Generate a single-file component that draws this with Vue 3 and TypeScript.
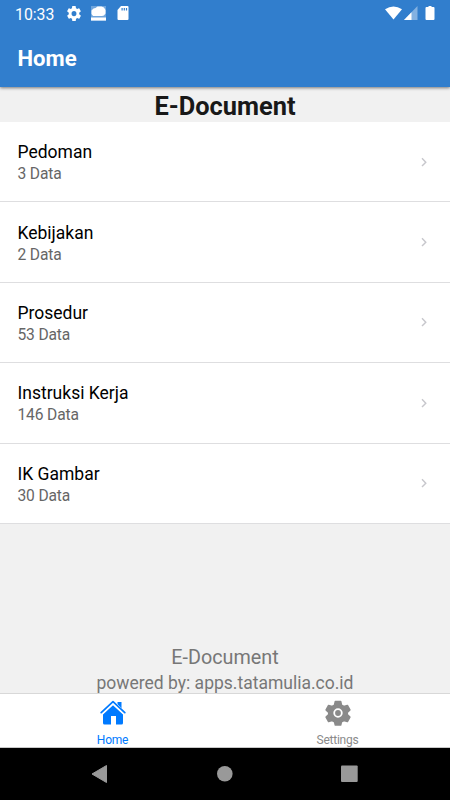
<script setup lang="ts">
interface Category {
  title: string
  count: number
}

const categories: Category[] = [
  { title: 'Pedoman', count: 3 },
  { title: 'Kebijakan', count: 2 },
  { title: 'Prosedur', count: 53 },
  { title: 'Instruksi Kerja', count: 146 },
  { title: 'IK Gambar', count: 30 },
]
</script>

<template>
  <div class="screen">
    <header class="top">
      <div class="status">
        <span class="clock">10:33</span>
        <svg class="s-gear" width="14" height="15" viewBox="2 2 20 20" preserveAspectRatio="none">
          <path fill="#fff" fill-rule="evenodd" d="M19.4 13a7.6 7.6 0 0 0 0-2l2.1-1.6a.5.5 0 0 0 .1-.7l-2-3.4a.5.5 0 0 0-.6-.2l-2.500 1a7.300 7.300 0 0 0-1.700-1l-.4-2.700a.5.5 0 0 0-.5-.4h-4a.5.5 0 0 0-.5.4l-.3 2.700a7.300 7.300 0 0 0-1.700 1l-2.500-1a.5.5 0 0 0-.6.2l-2 3.400a.5.5 0 0 0 .2.700L4.600 11a7.600 7.600 0 0 0 0 2l-2.100 1.600a.5.5 0 0 0-.1.700l2 3.400a.5.5 0 0 0 .6.200l2.500-1a7.300 7.300 0 0 0 1.700 1l.3 2.700a.5.5 0 0 0 .5.400h4a.5.5 0 0 0 .5-.4l.4-2.700a7.300 7.300 0 0 0 1.700-1l2.500 1a.5.5 0 0 0 .6-.2l2-3.400a.5.5 0 0 0-.1-.7zM12 15.500a3.500 3.500 0 1 1 0-7 3.500 3.500 0 0 1 0 7z" />
        </svg>
        <svg class="s-app" width="15" height="15" viewBox="0 0 15 15">
          <path fill="#fff" fill-opacity=".3" d="M0 0h15v15H0z" />
          <path fill="#fff" d="M2 10 .5 8V4.500l2-2 2-.5L6.500.5h4L13 1.500l1.500 2.500v3.500L13 9.500l-2 .5zM0 11.500h15v3H0z" />
        </svg>
        <svg class="s-card" width="12" height="14" viewBox="0 0 12 14">
          <path fill="#fff" fill-rule="evenodd" d="M4 0h6.500Q11.500 0 11.500 1v12q0 1-1 1h-9Q.5 14 .5 13V4zM4.500 2v2.500h1.200V2zM6.700 2v2.500h1.200V2zM8.900 2v2.500h1.200V2z" />
        </svg>
        <svg class="s-right" width="52" height="16" viewBox="0 0 52 16">
          <path fill="#fff" d="M2 3.200Q10.500-2.200 19 3.200L10.500 13.500z" />
          <path fill="#fff" fill-opacity=".4" d="M34.500 0v14H21z" />
          <path fill="#fff" d="M28.500 6.200V14H21z" />
          <path fill="#fff" d="M43.500 1h2V0h3v1h2q1 0 1 1v11q0 1-1 1h-7q-1 0-1-1V2q0-1 1-1z" />
        </svg>
      </div>
      <div class="nav-title">Home</div>
    </header>

    <main class="content">
      <h1 class="heading">E-Document</h1>
      <ul class="list">
        <li v-for="item in categories" :key="item.title" class="row">
          <div class="text">
            <div class="name">{{ item.title }}</div>
            <div class="count">{{ item.count }} Data</div>
          </div>
          <svg class="chevron" width="6" height="10" viewBox="0 0 6 10">
            <path d="M1 1.300l3.800 3.900L1 9.100" fill="none" stroke="#c7c7cc" stroke-width="1.400" />
          </svg>
        </li>
      </ul>
      <footer class="credit">
        <div class="product">E-Document</div>
        <div class="powered">powered by: apps.tatamulia.co.id</div>
      </footer>
    </main>

    <nav class="tabs">
      <div class="tab active">
        <svg width="26" height="25" viewBox="0 0 26 25">
          <path fill="currentColor" d="M17.500 2h4v6.500l-4-4zM13 5.200l10 9.300V23q0 1.500-1.500 1.500H16V16h-5v8.500H4.500Q3 24.500 3 23v-8.500z" />
          <path fill="none" stroke="#fff" stroke-width="3.200" d="M1.200 13.300 13 2.300l11.800 11" />
          <path fill="none" stroke="currentColor" stroke-width="1.700" stroke-linecap="round" stroke-linejoin="round" d="M1.200 12.600 13 1.600l11.800 11" />
        </svg>
        <span class="label">Home</span>
      </div>
      <div class="tab">
        <svg width="26" height="26" viewBox="0 0 26 26">
          <path fill="currentColor" stroke="currentColor" stroke-width="1.500" stroke-linejoin="round" d="M10.300 1.500h5.400l.8 3.600 2.400 1.400 3.500-1.100 2.500 4.500-2.600 2.500v2.200l2.600 2.500-2.500 4.500-3.500-1.100-2.400 1.400-.8 3.100h-5.400l-.8-3.100-2.400-1.400-3.500 1.100-2.500-4.500 2.600-2.500v-2.200l-2.600-2.500 2.500-4.500 3.500 1.100 2.400-1.400z" />
          <circle cx="13" cy="13" r="3.800" fill="none" stroke="#fff" stroke-width="1.800" />
        </svg>
        <span class="label">Settings</span>
      </div>
    </nav>

    <div class="system">
      <svg width="450" height="52" viewBox="0 0 450 52">
        <path fill="#999" stroke="#999" stroke-linejoin="round" d="M106.500 17.500v17L92 26z" />
        <circle cx="224.800" cy="25.700" r="7.800" fill="#999" />
        <rect x="341" y="17.500" width="16.700" height="16.500" rx="1" fill="#999" />
      </svg>
    </div>
  </div>
</template>

<style>
body {
  margin: 0;
}
</style>

<style scoped>
.screen {
  width: 450px;
  height: 800px;
  display: flex;
  flex-direction: column;
  overflow: hidden;
  background: #f1f1f1;
  font-family: Roboto, 'Liberation Sans', sans-serif;
}
.top {
  height: 87px;
  flex: none;
  background: #317ecd;
  color: #fff;
  box-shadow: 0 1px 3px rgba(0, 0, 0, 0.5);
  z-index: 1;
}
.status {
  display: flex;
  align-items: flex-start;
  height: 28px;
  box-sizing: border-box;
  padding: 6px 15px 0;
}
.clock {
  width: 52px;
  font-size: 15.800px;
  line-height: 17px;
}
.s-app {
  margin-left: 10px;
}
.s-card {
  margin-left: 11px;
}
.s-right {
  margin: 0 0 0 auto;
}
.nav-title {
  padding-left: 17.500px;
  line-height: 60px;
  font-size: 22.100px;
  font-weight: 700;
}
.content {
  flex: 1;
  display: flex;
  flex-direction: column;
}
.heading {
  margin: 0;
  height: 35px;
  line-height: 38px;
  font-size: 25.400px;
  font-weight: 700;
  text-align: center;
  color: #181818;
}
.list {
  list-style: none;
  margin: 0;
  padding: 0;
}
.row {
  height: 80.400px;
  box-sizing: border-box;
  padding: 0 23px 0 17.500px;
  display: flex;
  align-items: center;
  justify-content: space-between;
  background: #fff;
  border-bottom: 1px solid #dedee0;
}
.text {
  padding-top: 3px;
}
.name {
  font-size: 17.500px;
  line-height: 22px;
  color: #000;
}
.count {
  font-size: 15.600px;
  letter-spacing: -0.150px;
  line-height: 22px;
  color: #666;
}
.credit {
  margin-top: auto;
  text-align: center;
  color: #777;
}
.product {
  font-size: 19.800px;
  line-height: 26px;
}
.powered {
  font-size: 17.500px;
  line-height: 24px;
  margin-bottom: -2px;
}
.tabs {
  height: 55px;
  flex: none;
  box-sizing: border-box;
  display: flex;
  background: #fff;
  border-top: 1px solid #d8d8d8;
  border-bottom: 1px solid #c8c8c8;
}
.tab {
  flex: 1;
  display: flex;
  flex-direction: column;
  align-items: center;
  justify-content: space-between;
  padding-top: 6px;
  color: #8a8a8a;
}
.active {
  color: #007aff;
}
.label {
  font-size: 12px;
  letter-spacing: -0.250px;
  line-height: 14px;
}
.system {
  height: 52px;
  flex: none;
  background: #000;
}
.system svg {
  display: block;
}
</style>
